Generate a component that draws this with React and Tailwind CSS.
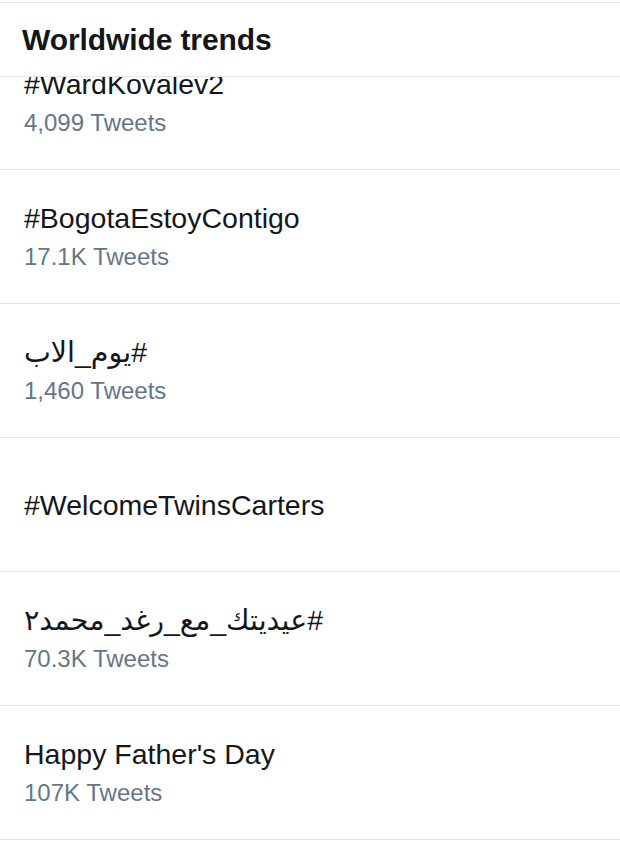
const trends = [
  { name: '#WardKovalev2', count: '4,099 Tweets' },
  { name: '#BogotaEstoyContigo', count: '17.1K Tweets' },
  { name: '#يوم_الاب', count: '1,460 Tweets', rtl: true },
  { name: '#WelcomeTwinsCarters' },
  { name: '#عيديتك_مع_رغد_محمد٢', count: '70.3K Tweets', rtl: true },
  { name: "Happy Father's Day", count: '107K Tweets' },
]

function TrendRow({ trend }) {
  return (
    <div className="h-[134px] border-b border-[#e1e4e8] flex flex-col justify-center pl-[24px]">
      <div
        dir={trend.rtl ? 'rtl' : undefined}
        className="text-left text-[28.5px] leading-[32px] text-[#14171a]"
      >
        {trend.name}
      </div>
      {trend.count && (
        <div className="mt-[8px] text-[24px] leading-[30px] text-[#657786]">
          {trend.count}
        </div>
      )}
    </div>
  )
}

export default function App() {
  return (
    <div
      className="w-[620px] h-[842px] bg-white overflow-hidden flex flex-col"
      style={{ fontFamily: '"Liberation Sans", "DejaVu Sans", sans-serif' }}
    >
      <div className="mt-[2px] h-[75px] shrink-0 border-t border-b border-[#e1e4e8] flex items-center pl-[22px] bg-white">
        <h2 className="text-[30px] font-bold text-[#14171a] tracking-[-0.1px]">
          Worldwide trends
        </h2>
      </div>
      <div className="flex-1 overflow-hidden">
        <div className="-mt-[41px]">
          {trends.map((t) => (
            <TrendRow key={t.name} trend={t} />
          ))}
        </div>
      </div>
    </div>
  )
}
